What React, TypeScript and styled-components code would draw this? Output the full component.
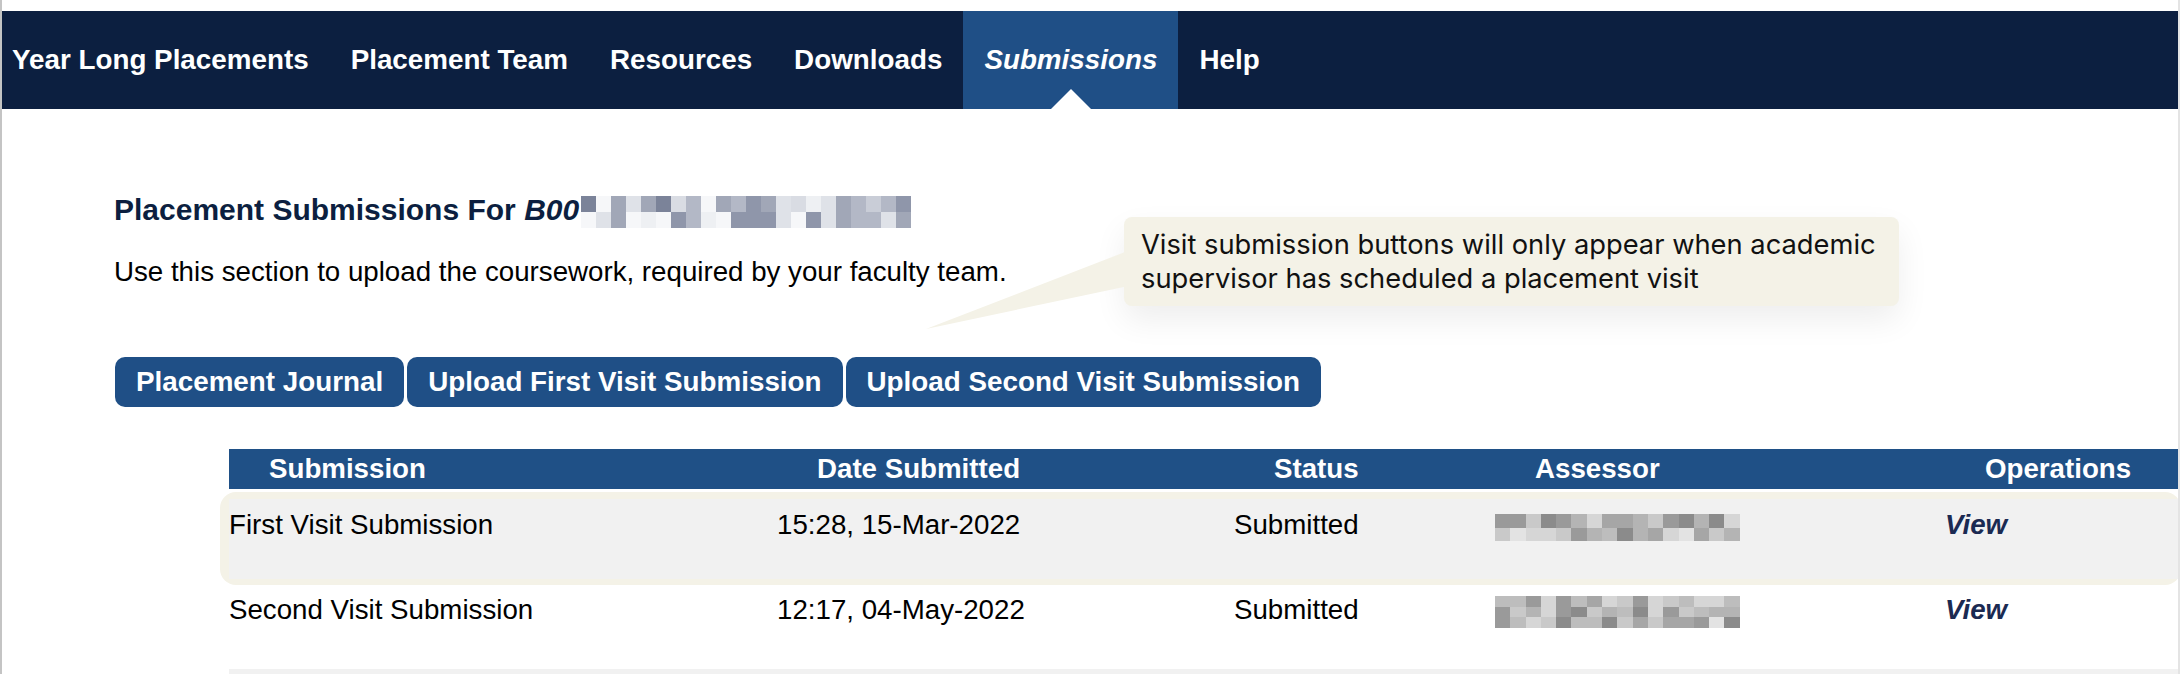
import styled, { createGlobalStyle } from "styled-components";

const GlobalStyle = createGlobalStyle`
  html, body {
    margin: 0;
    padding: 0;
    background: #ffffff;
    overflow: hidden;
  }
  body {
    font-family: "Liberation Sans", Arial, Helvetica, sans-serif;
    color: #000000;
  }
`;

const Page = styled.div`
  position: relative;
  width: 2180px;
  height: 674px;
  box-sizing: border-box;
  border-left: 2px solid #c4c4c4;
  border-right: 2px solid #e4e4e4;
  padding-top: 11px;
  overflow: hidden;
`;

const NavBar = styled.nav`
  display: flex;
  align-items: stretch;
  height: 98px;
  background: #0c1f40;
`;

const NavItem = styled.a<{ $active?: boolean }>`
  position: relative;
  display: flex;
  align-items: center;
  padding: 0 21px;
  font-size: 27.8px;
  font-weight: bold;
  font-style: ${(p) => (p.$active ? "italic" : "normal")};
  color: #ffffff;
  text-decoration: none;
  background: ${(p) => (p.$active ? "#1f4f86" : "transparent")};

  &:first-child {
    padding-left: 10px;
  }

  ${(p) =>
    p.$active &&
    `
    &::after {
      content: "";
      position: absolute;
      left: 50%;
      bottom: 0;
      margin-left: -20px;
      border-left: 20px solid transparent;
      border-right: 20px solid transparent;
      border-bottom: 20px solid #ffffff;
    }
  `}
`;

const Content = styled.section`
  position: relative;
  padding: 82.6px 0 0 112px;
`;

const Heading = styled.h2`
  display: flex;
  align-items: flex-start;
  margin: 0;
  font-size: 30px;
  line-height: 36px;
  font-weight: bold;
  color: #0c1f40;
  white-space: pre;

  em {
    font-style: italic;
  }
`;

const Intro = styled.p`
  margin: 26.8px 0 0;
  font-size: 27.7px;
  line-height: 34px;
`;

const ButtonRow = styled.div`
  display: flex;
  gap: 3px;
  margin: 68.6px 0 0 1px;
`;

const Button = styled.button`
  height: 50px;
  padding: 0 21px;
  border: none;
  border-radius: 10px;
  background: #1f4f86;
  color: #ffffff;
  font-family: "Liberation Sans", Arial, sans-serif;
  font-size: 27.8px;
  font-weight: bold;
  line-height: 32px;
  cursor: pointer;
`;

const Tooltip = styled.div`
  position: absolute;
  left: 1122px;
  top: 108px;
  width: 775px;
  box-sizing: border-box;
  padding: 11px 17px 10px;
  background: #f4f2e7;
  border-radius: 8px;
  box-shadow: 0 14px 32px rgba(0, 0, 0, 0.07);
  font-family: Inter, "Noto Sans", sans-serif;
  font-size: 27.3px;
  line-height: 34px;
  color: #111111;

  &::before {
    content: "";
    position: absolute;
    left: -198px;
    top: 35px;
    width: 199px;
    height: 77px;
    background: #f4f2e7;
    clip-path: polygon(100% 0, 100% 45%, 0 100%);
  }
`;

const Table = styled.div`
  margin: 42px 0 0 115px;
  display: flex;
  flex-direction: column;
`;

const Columns = styled.div`
  display: grid;
  grid-template-columns: 548px 457px 261px 450px 1fr;
`;

const HeadRow = styled(Columns)`
  height: 40px;
  background: #1f5086;
  color: #ffffff;
  font-size: 27.7px;
  font-weight: bold;
  line-height: 40px;
`;

const HeadCell = styled.div`
  padding-left: 40px;
  white-space: nowrap;
`;

const Row = styled(Columns)<{ $highlight?: boolean }>`
  position: relative;
  z-index: 0;
  height: 80px;
  margin-top: ${(p) => (p.$highlight ? "10px" : "5px")};
  font-size: 27.7px;
  line-height: 32px;

  ${(p) =>
    p.$highlight &&
    `
    &::before {
      content: "";
      position: absolute;
      top: -7px;
      left: -9px;
      right: -3px;
      bottom: -6px;
      border-radius: 16px;
      background: #f4f2e7;
      z-index: -1;
    }
    &::after {
      content: "";
      position: absolute;
      inset: 0;
      background: #f1f1f1;
      z-index: -1;
    }
  `}
`;

const FillerRow = styled.div`
  height: 40px;
  margin-top: 5px;
  background: #f1f1f1;
`;

const Cell = styled.div`
  padding-top: 9.4px;
  white-space: nowrap;
`;

const ViewLink = styled.a`
  font-weight: bold;
  font-style: italic;
  color: #1b2a52;
  text-decoration: none;
`;

const Pixels = styled.div<{ $cols: number; $cw: number; $ch: number; $top: number; $left?: number }>`
  display: grid;
  grid-template-columns: repeat(${(p) => p.$cols}, ${(p) => p.$cw}px);
  grid-auto-rows: ${(p) => p.$ch}px;
  margin-top: ${(p) => p.$top}px;
  margin-left: ${(p) => p.$left ?? 0}px;
`;

const Pixel = styled.span<{ $c: string }>`
  background: ${(p) => p.$c};
`;

const bluePalette = ["#d9dce3", "#b3b8c6", "#c9cdd7", "#7b8399", "#a1a7b7", "#eef0f3", "#8f96aa", "#dfe2e8", "#f6f7f9"];
const greyPalette = ["#c9c9c9", "#b4b4b4", "#d6d6d6", "#8b8b8b", "#a6a6a6", "#e3e3e3", "#bdbdbd", "#9a9a9a"];

function shades(count: number, seed: number, palette: string[]) {
  let s = seed;
  return Array.from({ length: count }, () => {
    s = (s * 9301 + 49297) % 233280;
    return palette[Math.floor((s / 233280) * palette.length)];
  });
}

const Redacted = ({ cols, rows, cw, ch, seed, palette, top, left }: {
  cols: number; rows: number; cw: number; ch: number; seed: number; palette: string[]; top: number; left?: number;
}) => (
  <Pixels $cols={cols} $cw={cw} $ch={ch} $top={top} $left={left}>
    {shades(cols * rows, seed, palette).map((c, i) => (
      <Pixel key={i} $c={c} />
    ))}
  </Pixels>
);

const navLinks = ["Year Long Placements", "Placement Team", "Resources", "Downloads", "Submissions", "Help"];

const submissions = [
  { name: "First Visit Submission", date: "15:28, 15-Mar-2022", status: "Submitted", seed: 17 },
  { name: "Second Visit Submission", date: "12:17, 04-May-2022", status: "Submitted", seed: 91 },
];

export default function App() {
  return (
    <>
      <GlobalStyle />
      <Page>
        <NavBar>
          {navLinks.map((link) => (
            <NavItem key={link} href="#" $active={link === "Submissions"}>
              {link}
            </NavItem>
          ))}
        </NavBar>

        <Content>
          <Heading>
            <span>
              Placement Submissions For <em>B00</em>
            </span>
            <Redacted cols={22} rows={2} cw={15} ch={16} seed={5} palette={bluePalette} top={4.4} left={2} />
          </Heading>
          <Intro>Use this section to upload the coursework, required by your faculty team.</Intro>

          <Tooltip>
            Visit submission buttons will only appear when academic supervisor has scheduled a placement visit
          </Tooltip>

          <ButtonRow>
            <Button>Placement Journal</Button>
            <Button>Upload First Visit Submission</Button>
            <Button>Upload Second Visit Submission</Button>
          </ButtonRow>

          <Table>
            <HeadRow>
              <HeadCell>Submission</HeadCell>
              <HeadCell>Date Submitted</HeadCell>
              <HeadCell>Status</HeadCell>
              <HeadCell>Assessor</HeadCell>
              <HeadCell>Operations</HeadCell>
            </HeadRow>
            {submissions.map((s, i) => (
              <Row key={s.name} $highlight={i === 0}>
                <Cell>{s.name}</Cell>
                <Cell>{s.date}</Cell>
                <Cell>{s.status}</Cell>
                <div>
                  <Redacted
                    cols={16}
                    rows={i === 0 ? 2 : 3}
                    cw={15.3}
                    ch={i === 0 ? 13.5 : 10.5}
                    seed={s.seed}
                    palette={greyPalette}
                    top={i === 0 ? 15 : 12}
                  />
                </div>
                <Cell>
                  <ViewLink href="#">View</ViewLink>
                </Cell>
              </Row>
            ))}
            <FillerRow />
          </Table>
        </Content>
      </Page>
    </>
  );
}
